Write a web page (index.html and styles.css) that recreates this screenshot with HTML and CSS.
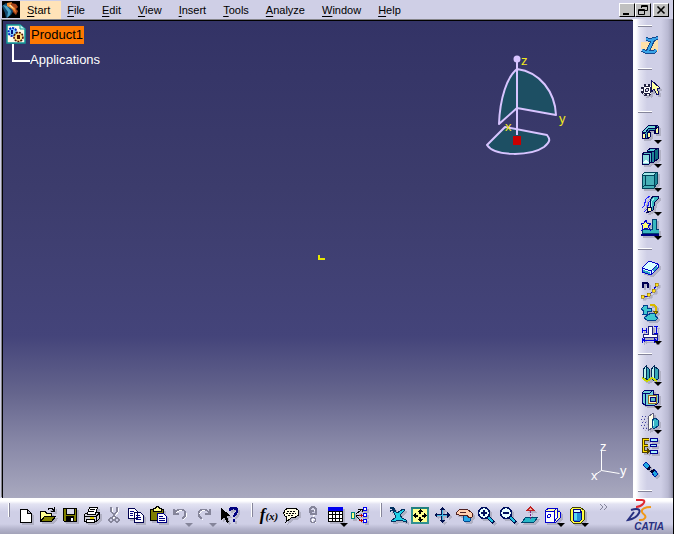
FILE: index.html
```html
<!DOCTYPE html>
<html lang="en">
<head>
<meta charset="utf-8">
<title>Product1</title>
<link rel="stylesheet" href="styles.css">
</head>
<body>
<header class="menubar">
  <svg class="app-icon" viewBox="0 0 18 17" aria-hidden="true"><path fill="#000" d="M0 0h18v17H0z"/><path fill="#124a70" d="M0 5l4-3 5 3 3 4-3 5-5 3-1-5z"/><path fill="#4ba3c7" d="M1 4l4 1 4 5-1 4-3 3 1-6z"/><path fill="#a7431b" d="M9 2l5 1 2 3-2 2 2 2-2 4-3-3z"/><path fill="#f08a32" d="M5 2l5-1-1 3 4 3 1 5-4-4-5-3z"/><path fill="#ffe6ae" d="M7 4h2l3 4-2-1z"/></svg>
  <nav class="menu" aria-label="Main menu">
    <button class="menu-item active"><u>S</u>tart</button>
    <button class="menu-item"><u>F</u>ile</button>
    <button class="menu-item"><u>E</u>dit</button>
    <button class="menu-item"><u>V</u>iew</button>
    <button class="menu-item"><u>I</u>nsert</button>
    <button class="menu-item"><u>T</u>ools</button>
    <button class="menu-item"><u>A</u>nalyze</button>
    <button class="menu-item"><u>W</u>indow</button>
    <button class="menu-item"><u>H</u>elp</button>
  </nav>
  <div class="window-controls">
    <button aria-label="Minimize"><svg viewBox="0 0 12 10"><path fill="#000" d="M2 8h6v2H2z"/></svg></button>
    <button aria-label="Restore"><svg viewBox="0 0 12 10"><path stroke="#000" d="M4.500 3V.5h6v5H8M4 1.500h7M1.500 4.500h6v5h-6zM1 5.500h7"/></svg></button>
    <button class="close" aria-label="Close"><svg viewBox="0 0 12 10"><path stroke="#000" stroke-width="1.600" d="M2.500 1.500l7 7M9.500 1.500l-7 7"/></svg></button>
  </div>
</header>

<div class="workspace">
  <main class="viewport">
    <ul class="tree">
      <li class="root">
        <svg class="root-icon" viewBox="0 0 20 20" aria-hidden="true"><path fill="#fffbe8" stroke="#109a9a" stroke-width="1.500" d="M1 1h13l5 4v14H1z"/><path fill="#c8f4f4" stroke="#109a9a" d="M14 1v4h5"/><circle cx="6.500" cy="8" r="4" fill="#8bd8ff" stroke="#0028c8" stroke-width="2" stroke-dasharray="2 1"/><path fill="#001080" d="M5 6h2v4H5z"/><circle cx="12.500" cy="13" r="4.500" fill="#ffe080" stroke="#501000" stroke-width="1.600" stroke-dasharray="2 1"/><path fill="#501000" d="M11 11h3v4h-3z"/></svg>
        <span class="node selected">Product1</span>
      </li>
      <li class="child"><span class="node">Applications</span></li>
    </ul>

    <svg class="compass" viewBox="0 0 90 110" role="img" aria-label="Compass">
      <g fill="#1d4f63" stroke="#d8c4ff" stroke-width="2" stroke-linejoin="round">
        <path d="M37 19C27 27 20 48 19 74L37 58z"/>
        <path d="M37 19C60 22 75 42 76 65L37 58z"/>
        <path d="M25 77L7 95C15 107 51 106 64 97C71 91 70 89 67 85z"/>
        <path fill="none" d="M37 10v75"/>
      </g>
      <circle cx="37" cy="9" r="3.500" fill="#d8c4ff"/>
      <path fill="#c80000" d="M33 86h8v9h-8z"/>
      <g class="compass-letters"><text x="41" y="15">z</text><text x="79" y="73">y</text><text x="25" y="81">x</text></g>
    </svg>

    <svg class="origin" viewBox="0 0 8 6" aria-hidden="true"><path stroke="#e6e600" stroke-width="2" d="M1 0v4h6"/></svg>

    <svg class="triad" viewBox="0 0 44 52" role="img" aria-label="Axis system">
      <path stroke="#fff" d="M14.500 17v19.500M14.500 36.500l18 3M14.500 36.500l-6 4"/>
      <g class="triad-letters"><text x="13" y="17">z</text><text x="33" y="41">y</text><text x="4" y="46">x</text></g>
    </svg>
  </main>

  <aside class="side-tools" aria-label="Product structure tools">
    <div class="side-group single">
      <button aria-label="Workbench"><svg viewBox="0 0 20 20"><path fill="#ffe0a8" d="M1 6h13l4-3v13H9l-8-3z"/><path stroke="#174a90" stroke-width="4" d="M6 3l4 1 8-2M13 4l-5 11M2 14l4 2h8l2-2"/><path stroke="#38a4e8" stroke-width="2" d="M6 3l4 1 8-2M13 4l-5 11M2 14l4 2h8l2-2"/></svg></button>
    </div>
    <div class="side-group single">
      <button aria-label="Select"><svg class="shade" viewBox="0 0 20 20"><circle cx="7" cy="11" r="5" fill="#fff" stroke="#202040" stroke-width="2.500" stroke-dasharray="2 2"/><circle cx="7" cy="11" r="4" fill="#fff" stroke="#202040"/><circle cx="7" cy="11" r="1.500" fill="#d0d0e6" stroke="#202040"/><path fill="#ffffa0" stroke="#101060" d="M11 1v12l3-3 3 6 2-1-2-6h3z"/></svg></button>
    </div>
    <div class="side-group">
      <button class="more" aria-label="Component"><svg class="shade" viewBox="0 0 18 18"><g stroke="#000050" stroke-linejoin="round"><path fill="#38a8b8" d="M1 9l7-7h8l2 2v6l-4 1-1-4H9l-2 3v5l-3 1v-5z"/><path fill="#70d8d8" d="M1 9l7-7h8l-2 3H8L4 10z"/><path fill="#ffffa0" d="M1 10l3 1v5l-3-1zM6 10l3-1v5l-3 2zM14 6l3-2v6l-3 1z"/></g></svg></button>
      <button class="more" aria-label="Product"><svg class="shade" viewBox="0 0 18 18"><g stroke="#000050" stroke-linejoin="round"><path fill="#208898" d="M6 4l4-3h7v11l-4 3H6z"/><path fill="#58c8d0" d="M6 4l4-3h7l-4 3z"/><path fill="#107080" d="M13 4l4-3v11l-4 3z"/><path fill="#50b8c0" d="M1 7l3-2h6v10l-2 2H1z"/><path fill="#88d8dc" d="M1 7h7v10H1z"/></g><path fill="#e8ffff" d="M2 16l3-4 3 4z"/></svg></button>
      <button class="more" aria-label="Part"><svg class="shade" viewBox="0 0 18 18"><g stroke="#004058" stroke-linejoin="round"><path fill="#48b0b8" d="M1 4l3-3h12v12l-3 4H1z"/><path fill="#a0e8e8" d="M1 4l3-3h12l-3 3z"/><path fill="#208898" d="M13 4l3-3v12l-3 4z"/><path d="M4 4v10h9M4 14l-3 3"/></g></svg></button>
      <button class="more" aria-label="Existing component"><svg class="shade" viewBox="0 0 18 18"><path stroke="#2020ff" d="M1 13l2-2 2-7 4-3M3 17l3-3 2-7 3-3"/><path fill="#38b8c0" stroke="#000050" d="M12 1h5v3l-3 3-2 8-4 2H6l3-5 1-8z"/><path fill="#ffffa0" stroke="#000050" d="M6 13l4-1v4l-4 1z"/><path stroke="#9cf0f0" d="M13 3l-2 3-1 6"/></svg></button>
      <button class="more" aria-label="Replace component"><svg class="shade" viewBox="0 0 18 18"><path fill="#38b8c0" stroke="#004070" d="M11 0h4v10h3v4H1v-4h10z"/><path fill="#ffff70" stroke="#0000d0" d="M5 1l1 3 4 1-3 2 2 4-4-2-4 2 1-4-2-2 3-1z"/><path stroke="#000080" stroke-width="2" d="M0 16h18"/></svg></button>
    </div>
    <div class="side-group compact">
      <button aria-label="Reorder tree"><svg class="shade" viewBox="0 0 18 18"><path fill="#d8ffff" stroke="#0000c8" stroke-linejoin="round" d="M1 9l7-7 9 3v4l-7 7-9-3z"/><path stroke="#0000c8" d="M1 9l9 3 7-7M10 12v4"/><path stroke="#30a8c0" stroke-width="2" d="M2 12l7 2M12 12l4-4"/></svg></button>
      <button aria-label="Generate numbering"><svg class="shade" viewBox="0 0 18 18"><path stroke="#000050" stroke-width="2" d="M2 7V1M2 2h4l1 1v4"/><path stroke="#0000d0" d="M2 16l5-1 5-5 4-7"/><path fill="#ffe020" stroke="#907000" stroke-width=".6" d="M0 14h3v3H0zM6 12h3v3H6zM11 8h3v3h-3zM14 2h3v3h-3z"/></svg></button>
      <button aria-label="Selective load"><svg class="shade" viewBox="0 0 18 18"><g fill="#40c8d0" stroke="#004090"><path d="M2 2h4v3h4v3H6v3H2l1-3-3-2 2-2z"/><path d="M7 12l3-2h4v3l3 2-2 2H6l-3-2z"/></g><path stroke="#d8b800" stroke-width="2" d="M9 2h4l2 2v5"/><path fill="#ffe000" stroke="#706000" d="M12 8h5l-2 3z"/></svg></button>
      <button class="more" aria-label="Manage representations"><svg class="shade" viewBox="0 0 18 18"><path fill="#fff" stroke="#202080" d="M7 1h4v8h5v3H2V9h5z"/><path stroke="#0000e0" d="M1 3v5M1 5.500h4M5 3v5M13 1.500h4M15 2v6M13 8.500h4M1 15.500h15M1 13v5M16 13v5"/><path fill="#0000e0" d="M1 15l3-2v5zM16 15l-3-2v5z"/></svg></button>
    </div>
    <div class="side-group">
      <button class="more" aria-label="Fast multi-instantiation"><svg class="shade" viewBox="0 0 18 18"><g fill="#38a8b8" stroke="#002858"><path d="M2 5l3-4 3 3v10l-3 2-3-3zM10 5l3-4 4 3v10l-4 2-3-3z"/><path fill="#b8f4ec" d="M2 5l3-4v13l-3-1zM10 5l3-4v13l-3-1z"/></g><path stroke="#c8d800" stroke-width="2" d="M1 13l5 3 5-3 5 3"/></svg></button>
      <button class="more" aria-label="Multi-instantiation"><svg class="shade" viewBox="0 0 18 18"><path fill="#70d0d8" stroke="#000070" d="M1 4l3-3h8v4h5v9l-3 2H4l-3-2z"/><path stroke="#000070" d="M1 4h8l3-3M4 5v11"/><path fill="#fff8c8" stroke="#907020" d="M7 6h8v8H7z"/><path fill="#58b8c8" stroke="#000070" d="M9 8h5v4H9z"/></svg></button>
      <button class="more" aria-label="Symmetry"><svg class="shade" viewBox="0 0 18 18"><path stroke="#4040a0" stroke-dasharray="1 2" d="M1 3.500h6M0 6.500h6M1 9.500h6M0 12.500h6M2 15.500h4"/><path fill="#ffffe8" stroke="#606080" d="M7 4l5-4v14l-5 4z"/><path fill="#38b8c8" stroke="#003878" d="M11 7l3-2 3 2v6l-4 3-2-2z"/><path stroke="#c0ffff" d="M12.500 8v5"/></svg></button>
      <button aria-label="Product management"><svg class="shade" viewBox="0 0 18 18"><path stroke="#504000" stroke-width="3" d="M8 2.500H2.500v12H7M3 8.500h4"/><path stroke="#ffe000" d="M8 2.500H2.500v12H7M3 8.500h4"/><path fill="#a8f4ff" stroke="#000090" d="M9.500 1.500h7v3h-7zM9.500 7.500h6v2h-6zM9.500 13.500h7v3h-7z"/><path fill="#504000" d="M6 11l4 3-4 3z"/></svg></button>
      <button aria-label="Connect"><svg class="shade" viewBox="0 0 18 18"><path fill="#20a8e0" stroke="#0020a0" d="M2 4l3-3 4 4-3 3zM10 11l3-3 4 5-3 3z"/><path stroke="#000030" stroke-width="2" d="M8 8l1 1M10 10l1 1M9 6L6 9M13 9l-3 3"/></svg></button>
    </div>
    <div class="side-group end"></div>
  </aside>
</div>

<footer class="bottom-bar">
  <div class="tool-group">
    <button aria-label="New"><svg class="shade" viewBox="0 0 18 18"><path fill="#fff" stroke="#000" d="M3.500 3.500h7l4 4v9h-11zM10.500 3.500v4h4"/></svg></button>
    <button aria-label="Open"><svg class="shade" viewBox="0 0 18 18"><path fill="#ffff90" stroke="#000" d="M1.500 15.500v-10h5l1 2h5v3"/><path fill="#808000" stroke="#000" d="M1.500 15.500l4-5h11l-4 5z"/><path stroke="#000" d="M9 3.500c2-2 4-2 6 1M15.500 1v4H12"/></svg></button>
    <button aria-label="Save"><svg class="shade" viewBox="0 0 18 18"><path fill="#808000" stroke="#000" d="M2.500 2.500h13v13h-12l-1-1z"/><path fill="#d8d8e8" stroke="#000" d="M5.500 2.500h8v6h-8z"/><path fill="#000" d="M5 10h8v6H5z"/><path fill="#fff" d="M10 12h2v3h-2z"/></svg></button>
    <button aria-label="Print"><svg class="shade" viewBox="0 0 18 18"><path fill="#d0d0d8" stroke="#000" d="M1.500 8.500l3-2h12v6l-3 3h-12z"/><path fill="#fff" stroke="#000" d="M4.500 8l2-6.500h8L12.500 8z"/><path stroke="#000" d="M7 3.500h5M6 5.500h5M1 10.500h12l3-3M13.500 11v4"/><path fill="#fff" stroke="#000" d="M3.500 13.500h8v3h-8z"/><path fill="#e0d000" d="M7 11h4v2H7z"/></svg></button>
    <button aria-label="Cut" disabled><svg viewBox="0 0 18 18"><g stroke="#fff"><path d="M7 2v4l5 7M13 2v4l-5 7"/></g><g stroke="#85859a" stroke-width="1.500"><path d="M6 1v4l5 7M12 1v4l-5 7"/><circle cx="6" cy="14" r="2"/><circle cx="12" cy="14" r="2"/></g></svg></button>
    <button aria-label="Copy"><svg class="shade" viewBox="0 0 18 18"><path fill="#fff" stroke="#000050" d="M1.500 2.500h6l3 3v7h-9zM7.500 6.500h6l3 3v7h-9z"/><path stroke="#000080" d="M3 5.500h4M3 7.500h3M3 9.500h3M9 9.500h4M9 11.500h5M9 13.500h5"/></svg></button>
    <button aria-label="Paste"><svg class="shade" viewBox="0 0 18 18"><path fill="#808000" stroke="#000" d="M1.500 3.500h13v11h-13z"/><path fill="#ffff90" stroke="#000" d="M4.500 5.500v-3h2l1-2h2l1 2h2v3z"/><path fill="#fff" stroke="#000080" d="M8.500 7.500h6l3 3v6h-9z"/><path stroke="#000080" d="M10 10.500h4M10 12.500h6M10 14.500h6"/></svg></button>
    <button class="wide more" aria-label="Undo" disabled><svg viewBox="0 0 18 18"><path stroke="#fff" d="M3 8c5-6 13-4 11 3l-3 3"/><path stroke="#85859a" stroke-width="1.500" d="M2 7c5-6 13-4 11 3l-3 3M2 3v5h5"/></svg></button>
    <button class="wide more" aria-label="Redo" disabled><svg viewBox="0 0 18 18"><path stroke="#fff" d="M15 8C10 2 2 4 4 11l3 3"/><path stroke="#85859a" stroke-width="1.500" d="M14 7C9 1 1 3 3 10l3 3M14 3v5H9"/></svg></button>
    <button class="wide" aria-label="What's this?"><svg class="shade" viewBox="0 0 18 18"><path fill="#000" d="M1 2v12l3-3 3 6 2-1-2-6h4z"/><path stroke="#000080" stroke-width="2.500" d="M10 5c0-4 7-4 7 0 0 3-3 3-3 6M14 13v3"/></svg></button>
  </div>
  <div class="tool-group">
    <button class="formula" aria-label="Formula"><b>f</b><small>(x)</small></button>
    <button aria-label="Comment"><svg class="shade" viewBox="0 0 18 18"><path fill="#fffde0" stroke="#000" d="M9 2c5 0 8 2 8 5s-4 5-8 5l-5 4 1-5C0 9 1 2 9 2z"/><path stroke="#000" stroke-dasharray="2 1" d="M5 5.500h8M4 7.500h10M6 9.500h6"/></svg></button>
    <button aria-label="Knowledge check" disabled><svg viewBox="0 0 18 18"><g stroke="#fff"><path d="M7 7V4h5v4l-3 2v2"/><circle cx="10" cy="15" r="2"/></g><g stroke="#85859a" stroke-width="1.500"><path d="M6 7V3l2-2h2l2 2v5H7V5h3"/><circle cx="9" cy="14" r="2.500"/></g></svg></button>
    <button class="wide more" aria-label="Design table"><svg class="shade" viewBox="0 0 18 18"><path fill="#fff" stroke="#000" d="M1.500 2.500h14v13h-14zM1.500 5.500h14M1.500 8.500h14M1.500 12.500h14M5.500 3v12M8.500 3v12M12.500 3v12"/><path fill="#0000f0" d="M1 1h15v4H1z"/></svg></button>
    <button aria-label="Relations"><svg class="shade" viewBox="0 0 18 18"><path stroke="#000" d="M6 9.500h4M6 8l5-4M6 10l4 4M8 3.500h4v2"/><path stroke="#c00000" d="M9 9.500h4M11.500 8v3M9 14.500h4M11.500 13v3"/><path fill="#ffff80" stroke="#008080" d="M1.500 6.500h3v6h-3z"/><path fill="#fff" stroke="#0000f0" d="M13.500 1.500h3v3h-3zM13.500 7.500h3v3h-3zM13.500 13.500h3v3h-3z"/></svg></button>
  </div>
  <div class="tool-group">
    <button aria-label="Fly mode"><svg class="shade" viewBox="0 0 18 18"><path fill="#20d0e8" stroke="#003060" d="M3 3l5 4 6-4 2 1-5 5 2 3 4 2v2l-6-2-8 2-1-1 5-4-2-4z"/><path stroke="#003060" stroke-width="1.500" d="M1 2h3M1 5l3-1M4 1l2 4"/></svg></button>
    <button aria-label="Fit all in"><svg viewBox="0 0 18 18"><path fill="#ffff90" stroke="#309090" stroke-width="2" d="M1 2h16v15H1z"/><path fill="#208080" d="M0 1h18v2H0z"/><path fill="#000" d="M9 3l3 3h-2v2H8V6H6zM9 16l-3-3h2v-2h2v2h2zM2 9.500l3-3v2h2v2H5v2zM16 9.500l-3-3v2h-2v2h2v2z"/></svg></button>
    <button aria-label="Pan"><svg class="shade" viewBox="0 0 18 18"><path fill="#001050" d="M9 1l3 3h-2v4h4V6l3 3-3 3v-2h-4v4h2l-3 3-3-3h2v-4H4v2L1 9l3-3v2h4V4H6z"/><path stroke="#40b8e0" d="M9.500 4v10M4 9.500h10"/></svg></button>
    <button aria-label="Rotate"><svg class="shade" viewBox="0 0 18 18"><circle cx="12" cy="12" r="4" fill="#28a8e8" stroke="#004890"/><path fill="#ffd0b0" stroke="#502020" d="M1 7l3-3 8-1 5 4v4l-3 1-2-3-5 1-6-2z"/><path stroke="#502020" d="M5 6.500h6M4 9.500h6"/></svg></button>
    <button aria-label="Zoom in"><svg class="shade" viewBox="0 0 18 18"><path stroke="#001050" stroke-width="4" d="M11 11l6 6"/><path stroke="#20c0e0" stroke-width="2" d="M11 11l5 5"/><circle cx="7" cy="7" r="5.500" fill="#e8ffff" stroke="#001060" stroke-width="1.500"/><path stroke="#001060" stroke-width="2" d="M4 7h6M7 4v6"/></svg></button>
    <button aria-label="Zoom out"><svg class="shade" viewBox="0 0 18 18"><path stroke="#001050" stroke-width="4" d="M11 11l6 6"/><path stroke="#20c0e0" stroke-width="2" d="M11 11l5 5"/><circle cx="7" cy="7" r="5.500" fill="#e8ffff" stroke="#001060" stroke-width="1.500"/><path stroke="#001060" stroke-width="2" d="M4 7h6"/></svg></button>
    <button aria-label="Normal view"><svg class="shade" viewBox="0 0 18 18"><path fill="#28b8c8" stroke="#004870" d="M1 16l4-5h12l-4 5z"/><path stroke="#802080" stroke-dasharray="2 1" d="M9.500 13V4"/><path fill="#f0b0a0" stroke="#c02020" d="M9.500 1l3 3h-6z"/></svg></button>
    <button class="wide more" aria-label="Isometric view"><svg class="shade" viewBox="0 0 18 18"><path fill="#ffffb0" stroke="#0000d0" d="M1 5l4-3h8v3l3 1v6l-4 4H1z"/><path fill="#fff" stroke="#0000d0" d="M1 5h9v11H1zM10 5l3-3M13 5v7l-3 4"/><circle cx="5" cy="10" r="1.500" stroke="#0000d0"/></svg></button>
    <button class="wide more" aria-label="Shading"><svg class="shade" viewBox="0 0 18 18"><path fill="#ffff40" stroke="#404000" d="M2 4l3-3h7l4 3v10l-3 3H5l-3-3z"/><path fill="#2090d8" stroke="#000080" d="M5 5h8v9l-1 1H6l-1-1z"/><path fill="#58d8f0" d="M6 7h3v7H6z"/><ellipse cx="9" cy="5" rx="4" ry="2" fill="#e0ffff" stroke="#000080"/></svg></button>
  </div>
  <button class="overflow" aria-label="More tools"><svg viewBox="0 0 10 8"><path stroke="#85859a" d="M1 1l3 3-3 3M5 1l3 3-3 3"/></svg></button>
  <div class="brand">
    <svg viewBox="0 0 26 24" aria-hidden="true"><path stroke="#e02830" stroke-width="2" d="M10 2h6c3 0 3 2 1 4-2 2-4 3-7 3"/><path stroke="#283080" stroke-width="2" d="M5 12c6-2 10-1 8 3s-5 6-11 7l6-8"/><path stroke="#f09818" stroke-width="2" d="M25 9c-6 0-10 2-9 5s5 3 3 6-4 2-6 2"/></svg>
    <span>CATIA</span>
  </div>
</footer>
</body>
</html>
```

FILE: styles.css
```css
* {
  box-sizing: border-box;
}

body {
  margin: 0;
  min-height: 100vh;
  display: flex;
  flex-direction: column;
  background: #cfcfe6;
  border-right: 1px solid #000;
  font-family: "Liberation Sans", Arial, sans-serif;
  font-size: 11px;
  color: #000;
}

button {
  margin: 0;
  padding: 0;
  border: 0;
  background: none;
  font: inherit;
  color: inherit;
}

svg {
  display: block;
  fill: none;
}

/* Menu bar */
.menubar {
  display: flex;
  align-items: center;
  height: 19px;
  padding: 0 4px 0 2px;
}

.app-icon {
  width: 18px;
  height: 17px;
}

.menu {
  display: flex;
  flex: 1;
  gap: 17px;
}

.menu-item {
  height: 18px;
  line-height: 18px;
}

.menu-item u {
  text-underline-offset: 2px;
}

.menu-item.active {
  padding: 0 11px 0 7px;
  margin-right: -11px;
  background: #ffe3b8;
}

.window-controls {
  display: flex;
}

.window-controls button {
  width: 16px;
  height: 14px;
  padding: 1px;
  background: #c0c0c0;
  border: 1px solid;
  border-color: #fff #000 #000 #fff;
}

.window-controls svg {
  width: 12px;
  height: 10px;
}

.window-controls .close {
  margin-left: 2px;
}

/* Workspace */
.workspace {
  display: flex;
  flex: 1;
}

.viewport {
  position: relative;
  flex: 1;
  margin: 1px 0 0 2px;
  border: solid #000;
  border-width: 1px 0 0 1px;
  box-shadow: -1px -1px 0 #85858a;
  background: linear-gradient(#333366 0%, #3c3c6c 35%, #44447a 66%, #65658d 78%, #8686a6 88%, #a9a9bf 100%);
}

.tree {
  margin: 0;
  padding: 3px 0 0 3px;
  list-style: none;
  font-size: 13px;
  color: #fff;
}

.root {
  display: flex;
  align-items: center;
  gap: 4px;
}

.root-icon {
  width: 20px;
  height: 20px;
}

.node {
  display: block;
  line-height: 18px;
}

.node.selected {
  padding: 0 1px;
  margin-top: 2px;
  background: #ff7800;
  color: #000;
}

.child {
  display: flex;
  margin-left: 6px;
}

.child::before {
  content: "";
  width: 16px;
  height: 16px;
  border: solid #fff;
  border-width: 0 0 2px 2px;
}

.child .node {
  padding-top: 7px;
}

.compass {
  position: absolute;
  top: 29px;
  right: 63px;
  width: 90px;
  height: 110px;
}

.compass-letters {
  fill: #f0e820;
  font-size: 13px;
}

.origin {
  position: absolute;
  top: 49%;
  left: 50%;
  width: 8px;
  height: 6px;
}

.triad {
  position: absolute;
  right: 2px;
  bottom: 12px;
  width: 44px;
  height: 52px;
}

.triad-letters {
  fill: #fff;
  font-size: 13px;
}

/* Side toolbar */
.side-tools {
  width: 40px;
  padding: 6px 10px 0 5px;
  background: linear-gradient(90deg, #fff 0, #fff 3px, #e3e3f2 7px, #cfcfe6 14px, #cfcfe6 28px, #b9b9d2 35px, #a4a4bc 38px, #85859a 40px);
}

.side-group {
  padding-bottom: 8px;
}

.side-group::before {
  content: "";
  display: block;
  width: 14px;
  height: 2px;
  margin-bottom: 7px;
  background: linear-gradient(#fff 50%, #85859a 50%);
}

.side-group button {
  position: relative;
  display: flex;
  align-items: center;
  justify-content: center;
  width: 24px;
  height: 24px;
}

.side-group.compact button {
  height: 22px;
}

.side-group.single {
  padding-bottom: 10px;
}

.side-group.end {
  padding: 0;
}

.side-group.end::before {
  margin: 0;
}

.side-group svg {
  width: 18px;
  height: 18px;
  shape-rendering: crispEdges;
}

.side-group.single svg {
  width: 20px;
  height: 20px;
}

.shade {
  filter: drop-shadow(2px 2px 0 #b0b0c3);
}

.more::after {
  content: "";
  position: absolute;
  right: 0;
  bottom: 0;
  border: solid transparent;
  border-width: 4px 4px 0;
  border-top-color: #000;
}

.more:disabled::after {
  border-top-color: #85859a;
}

/* Bottom toolbar */
.bottom-bar {
  display: flex;
  align-items: flex-start;
  height: 36px;
  padding-left: 8px;
  background: linear-gradient(#fff 0, #fff 3px, #e3e3f2 6px, #cfcfe6 14px, #cfcfe6 26px, #b4b4cc 31px, #a2a2b8 36px);
}

.tool-group {
  display: flex;
  padding-top: 5px;
  margin-right: 10px;
}

.tool-group::before {
  content: "";
  width: 2px;
  height: 14px;
  margin-right: 5px;
  background: linear-gradient(90deg, #fff 50%, #85859a 50%);
}

.tool-group button {
  position: relative;
  display: flex;
  align-items: center;
  justify-content: center;
  width: 22px;
  height: 24px;
}

.tool-group .wide {
  width: 24px;
}

.tool-group svg {
  width: 18px;
  height: 18px;
  shape-rendering: crispEdges;
}

.tool-group .formula {
  align-items: baseline;
  line-height: 24px;
  font-family: "Liberation Serif", serif;
  font-style: italic;
}

.formula b {
  font-size: 17px;
}

.formula small {
  font-size: 11px;
  font-weight: bold;
}

.overflow {
  padding: 5px 0;
}

.overflow svg {
  width: 10px;
  height: 8px;
}

.brand {
  display: flex;
  flex-direction: column;
  margin-left: auto;
  margin-right: 9px;
  color: #283080;
  font-size: 10px;
  font-weight: bold;
  font-style: italic;
  line-height: 9px;
}

.brand svg {
  width: 26px;
  height: 24px;
}

.brand span {
  margin-left: 8px;
}
```
